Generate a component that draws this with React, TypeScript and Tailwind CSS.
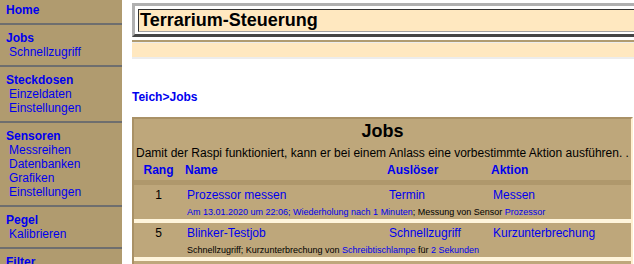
import React from 'react';

const menu = [
  { title: 'Home', items: [] as string[] },
  { title: 'Jobs', items: ['Schnellzugriff'] },
  { title: 'Steckdosen', items: ['Einzeldaten', 'Einstellungen'] },
  { title: 'Sensoren', items: ['Messreihen', 'Datenbanken', 'Grafiken', 'Einstellungen'] },
  { title: 'Pegel', items: ['Kalibrieren'] },
  { title: 'Filter', items: [] as string[] },
];

const link = 'text-[#0000ee]';

export default function App() {
  return (
    <div className="flex h-[264px] w-[634px] overflow-hidden bg-white font-['Liberation_Sans',Arial,sans-serif] text-[12px] leading-[14px] text-black">
      {/* Menü */}
      <nav className="w-[122px] shrink-0 bg-[#b09b6f]">
        {menu.map((m, i) => (
          <div
            key={m.title}
            className={
              (i === 0 ? 'pt-[3px] ' : 'pt-[6px] ') +
              'border-b-2 border-[#6e6e6e] pb-[6px]'
            }
          >
            <div className={`pl-[6px] font-bold ${link}`}>{m.title}</div>
            {m.items.map((it) => (
              <div key={it} className={`pl-[9px] ${link}`}>
                {it}
              </div>
            ))}
          </div>
        ))}
      </nav>

      <main className="ml-[10px] min-w-0 flex-1 pt-[3px]">
        {/* Titel */}
        <div className="w-[560px] border-[3px] border-t-[#b0b0b0] border-l-[#b0b0b0] border-b-[#454545] border-r-[#454545] bg-white px-[3px] pt-[3px] pb-[2px]">
          <div className="h-[23px] border border-t-[#333333] border-l-[#333333] border-b-[#a0a0a0] border-r-[#a0a0a0] bg-[#ffe8c0] pl-[1px] text-[18px] font-bold leading-[21px]">
            Terrarium-Steuerung
          </div>
        </div>
        <div className="mt-[3px] w-[560px] border-t-2 border-[#b09b6f]" />
        <div className="h-[17px] w-[560px] border-t border-b-2 border-[#ececec] bg-[#ffe8c0]" />

        {/* Pfad */}
        <div className={`mt-[31px] font-bold ${link}`}>
          Teich&gt;Jobs
        </div>

        {/* Jobs */}
        <section className="mt-[13px] w-[501px] border-2 border-t-[#a99166] border-l-[#a99166] border-r-[#fff0d0] border-b-[#fff0d0] bg-[#bea77b] pb-[10px]">
          <h1 className="mt-[2px] text-center text-[18px] font-bold leading-[21px]">Jobs</h1>
          <p className="mt-[4px] whitespace-nowrap pl-[2px]">
            Damit der Raspi funktioniert, kann er bei einem Anlass eine vorbestimmte Aktion ausführen. .
          </p>
          <div className={`mt-[3px] grid grid-cols-[49px_202px_104px_1fr] pb-[3px] font-bold ${link}`}>
            <div className="text-center">Rang</div>
            <div className="pl-[2px]">Name</div>
            <div className="pl-[2px]">Auslöser</div>
            <div className="pl-[2px]">Aktion</div>
          </div>
          <div className="h-[5px] bg-[#af986c]" />

          {/* Job 1 */}
          <div className="grid h-[34px] grid-cols-[49px_202px_104px_1fr] pt-[3px]">
            <div className="text-center">1</div>
            <div className={`pl-[4px] ${link}`}>Prozessor messen</div>
            <div className={`pl-[4px] ${link}`}>Termin</div>
            <div className={`pl-[4px] ${link}`}>Messen</div>
            <div className="col-span-3 col-start-2 mt-[4px] whitespace-nowrap pl-[4px] text-[9px] leading-[11px]">
              <span className={link}>Am 13.01.2020 um 22:06; Wiederholung nach 1 Minuten</span>
              ; Messung von Sensor <span className={link}>Prozessor</span>
            </div>
          </div>
          <div className="h-[4px] bg-[#fff5dc]" />

          {/* Job 2 */}
          <div className="grid h-[34px] grid-cols-[49px_202px_104px_1fr] pt-[3px]">
            <div className="text-center">5</div>
            <div className={`pl-[4px] ${link}`}>Blinker-Testjob</div>
            <div className={`pl-[4px] ${link}`}>Schnellzugriff</div>
            <div className={`pl-[4px] ${link}`}>Kurzunterbrechung</div>
            <div className="col-span-3 col-start-2 mt-[4px] whitespace-nowrap pl-[4px] text-[9px] leading-[11px]">
              Schnellzugriff; Kurzunterbrechung von <span className={link}>Schreibtischlampe</span> für{' '}
              <span className={link}>2 Sekunden</span>
            </div>
          </div>
          <div className="h-[4px] bg-[#fff5dc]" />
        </section>
      </main>
    </div>
  );
}
